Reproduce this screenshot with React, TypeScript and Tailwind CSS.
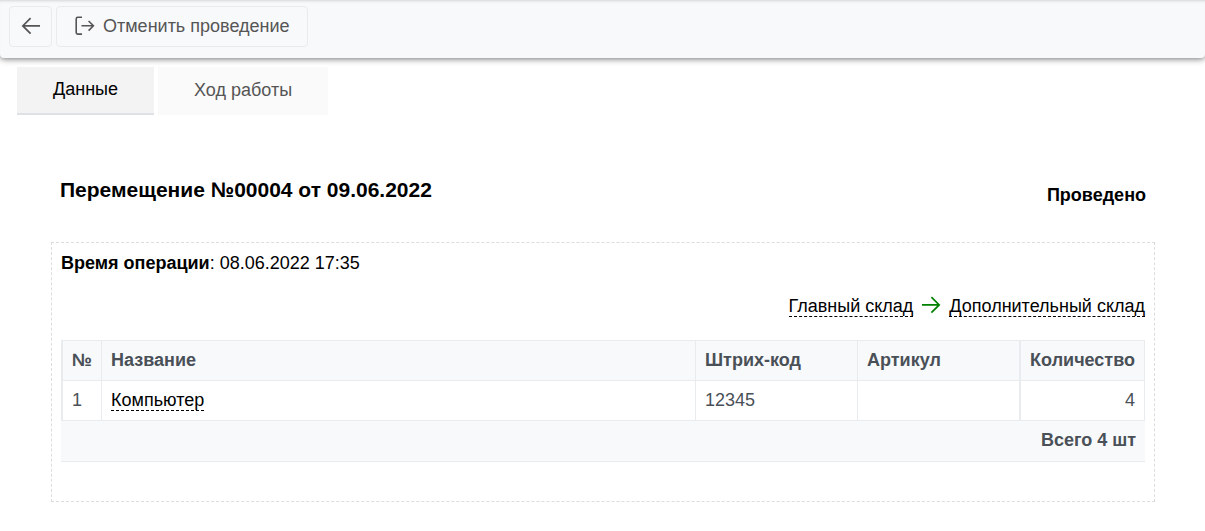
const items = [
  { id: 1, name: 'Компьютер', barcode: '12345', article: '', count: 4 },
];

const ArrowIcon = ({ className }: { className?: string }) => (
  <svg
    xmlns="http://www.w3.org/2000/svg"
    className={className}
    fill="none"
    viewBox="0 0 20 20"
    stroke="currentColor"
    strokeWidth={1.7}
    aria-hidden="true"
  >
    <path d="M1 8.9h17.2M10.4 1.1l7.8 7.8-7.8 7.8" />
  </svg>
);

const ExitIcon = () => (
  <svg
    xmlns="http://www.w3.org/2000/svg"
    className="h-5 w-5"
    fill="none"
    viewBox="0 0 20 20"
    stroke="currentColor"
    strokeWidth={1.6}
    aria-hidden="true"
  >
    <path d="M7 1.3H2.8Q1.2 1.3 1.2 2.9v13.6q0 1.6 1.6 1.6H7M6.5 9.8h12M13.6 5l4.8 4.8-4.8 4.8" />
  </svg>
);

const Toolbar = () => (
  <header className="flex h-[58px] gap-1 rounded-b bg-[#f8f9fb] px-[9px] py-[6px] shadow-[inset_0_3px_3px_-2px_rgba(0,0,0,0.15),0_1px_6px_rgba(0,0,0,0.55)]">
    <button
      type="button"
      aria-label="Назад"
      className="flex h-[41px] w-[43px] items-center justify-center rounded border border-[#e9ebee] pt-px text-[#555555]"
    >
      <ArrowIcon className="h-5 w-5 -scale-x-100" />
    </button>
    <button
      type="button"
      className="flex h-[41px] items-center gap-2 rounded border border-[#e9ebee] pr-[17px] pb-[2px] pl-[18px] text-[#555555]"
    >
      <ExitIcon />
      Отменить проведение
    </button>
  </header>
);

const Tabs = () => (
  <div role="tablist" className="flex gap-1 px-[17px] pt-[9px]">
    <button
      type="button"
      role="tab"
      aria-selected="true"
      className="h-12 border-b-2 border-[#dee2e6] bg-[#f3f3f3] px-9 pb-[2px] text-black"
    >
      Данные
    </button>
    <button
      type="button"
      role="tab"
      aria-selected="false"
      className="h-12 bg-[#fafafa] px-9 pb-[2px] text-[#555555]"
    >
      Ход работы
    </button>
  </div>
);

const ItemsTable = () => (
  <table className="w-full border-separate border-spacing-0 text-left text-[#495057]">
    <thead className="bg-[#f8f9fb]">
      <tr className="h-10">
        <th className="w-[41px] border-t border-r border-l-2 border-[#e9ecef] px-[9px] pb-[2px]">
          №
        </th>
        <th className="border-t border-r border-[#e9ecef] px-[9px] pb-[2px]">Название</th>
        <th className="w-[162px] border-t border-r border-[#e9ecef] px-[9px] pb-[2px]">
          Штрих-код
        </th>
        <th className="w-[163px] border-t border-r-2 border-[#e9ecef] px-[9px] pb-[2px]">
          Артикул
        </th>
        <th className="w-[124px] border-t border-r border-[#e9ecef] px-[9px] pb-[2px] text-right">
          Количество
        </th>
      </tr>
    </thead>
    <tbody>
      {items.map((item) => (
        <tr key={item.id} className="h-10">
          <td className="border-t border-r border-l-2 border-[#e9ecef] px-[9px] pb-[2px]">
            {item.id}
          </td>
          <td className="border-t border-r border-[#e9ecef] px-[9px] pb-[2px]">
            <a href="#item" className="border-b border-dashed border-black text-black">
              {item.name}
            </a>
          </td>
          <td className="border-t border-r border-[#e9ecef] px-[9px] pb-[2px]">
            {item.barcode}
          </td>
          <td className="border-t border-r-2 border-[#e9ecef] px-[9px] pb-[2px]">
            {item.article}
          </td>
          <td className="border-t border-r border-[#e9ecef] px-[9px] pb-[2px] text-right">
            {item.count}
          </td>
        </tr>
      ))}
    </tbody>
    <tfoot className="bg-[#f8f9fb]">
      <tr className="h-[42px]">
        <td
          colSpan={5}
          className="border-y border-[#e9ecef] px-[9px] pb-[3px] text-right font-bold"
        >
          Всего 4 шт
        </td>
      </tr>
    </tfoot>
  </table>
);

const App = () => {
  return (
    <div className="bg-white font-['Liberation_Sans',Arial,sans-serif] text-[18px] leading-6 text-black">
      <Toolbar />
      <Tabs />

      <main className="pt-[59px] pr-[50px] pb-7 pl-[51px]">
        <div className="flex items-start justify-between px-[9px]">
          <h1 className="pt-[2px] text-[21px] leading-7 font-bold">
            Перемещение №00004 от 09.06.2022
          </h1>
          <strong className="pt-[9px]">Проведено</strong>
        </div>

        <section className="mt-[35px] border border-dashed border-[#dddddd] px-[9px] pt-2 pb-[39px]">
          <p>
            <strong>Время операции</strong>: 08.06.2022 17:35
          </p>
          <div className="flex items-start justify-end gap-2 pt-[21px] pb-[23px]">
            <a href="#from" className="border-b border-dashed border-black leading-5">
              Главный склад
            </a>
            <ArrowIcon className="h-5 w-5 text-[#008000]" />
            <a href="#to" className="border-b border-dashed border-black leading-5">
              Дополнительный склад
            </a>
          </div>
          <ItemsTable />
        </section>
      </main>
    </div>
  );
};

export default App;
